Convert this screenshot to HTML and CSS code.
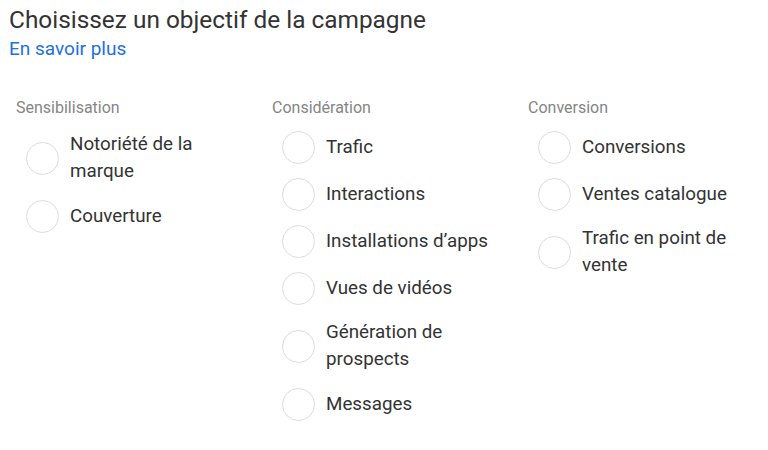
FILE: index.html
```html
<!DOCTYPE html>
<html lang="fr">
<head>
<meta charset="utf-8">
<title>Objectif de la campagne</title>
<link rel="stylesheet" href="styles.css">
</head>
<body>
<main class="objective">
  <h1 class="objective-title">Choisissez un objectif de la campagne</h1>
  <a class="learn-more" href="#">En savoir plus</a>

  <div class="groups">
    <section class="group">
      <h2 class="group-title">Sensibilisation</h2>
      <ul class="options">
        <li class="option"><span class="radio"></span><span class="label">Notoriété de la marque</span></li>
        <li class="option"><span class="radio"></span><span class="label">Couverture</span></li>
      </ul>
    </section>

    <section class="group">
      <h2 class="group-title">Considération</h2>
      <ul class="options">
        <li class="option"><span class="radio"></span><span class="label">Trafic</span></li>
        <li class="option"><span class="radio"></span><span class="label">Interactions</span></li>
        <li class="option"><span class="radio"></span><span class="label">Installations d’apps</span></li>
        <li class="option"><span class="radio"></span><span class="label">Vues de vidéos</span></li>
        <li class="option"><span class="radio"></span><span class="label">Génération de prospects</span></li>
        <li class="option"><span class="radio"></span><span class="label">Messages</span></li>
      </ul>
    </section>

    <section class="group">
      <h2 class="group-title">Conversion</h2>
      <ul class="options">
        <li class="option"><span class="radio"></span><span class="label">Conversions</span></li>
        <li class="option"><span class="radio"></span><span class="label">Ventes catalogue</span></li>
        <li class="option"><span class="radio"></span><span class="label">Trafic en point de vente</span></li>
      </ul>
    </section>
  </div>
</main>
</body>
</html>
```

FILE: styles.css
```css
* {
  box-sizing: border-box;
}

body {
  margin: 0;
  background: #ffffff;
  font-family: Roboto, "Noto Sans", "Liberation Sans", sans-serif;
  color: #333333;
}

.objective {
  padding: 6px 9px 0 9px;
}

.objective-title {
  margin: 0;
  font-size: 24.4px;
  font-weight: 400;
  line-height: 28px;
  color: #333333;
}

.learn-more {
  display: inline-block;
  margin-top: 4px;
  font-size: 19px;
  line-height: 22px;
  color: #2170e0;
  text-decoration: none;
}

.groups {
  display: grid;
  grid-template-columns: repeat(3, 256px);
  margin-top: 38px;
  padding-left: 7px;
}

.group-title {
  margin: 0 0 11px 0;
  font-size: 16px;
  font-weight: 400;
  line-height: 20px;
  color: #858585;
}

.options {
  list-style: none;
  margin: 0;
  padding: 0 0 0 10px;
  display: flex;
  flex-direction: column;
  gap: 11px;
}

.option {
  display: flex;
  align-items: center;
  min-height: 36px;
}

.radio {
  flex: none;
  width: 33px;
  height: 33px;
  border: 1.5px solid #dcdcdc;
  border-radius: 50%;
  background: #ffffff;
}

.label {
  max-width: 172px;
  margin-left: 11px;
  padding: 2px 0;
  font-size: 18.8px;
  line-height: 27px;
  color: #333333;
}
```
